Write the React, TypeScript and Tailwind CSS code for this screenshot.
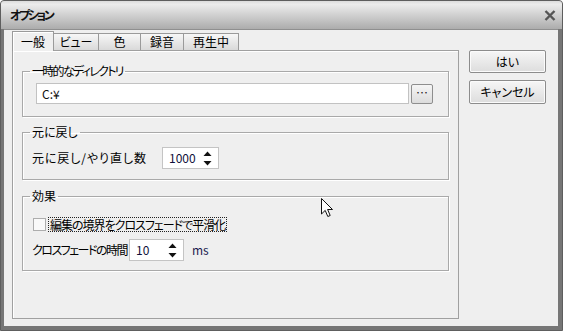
import React from 'react';

// タブ定義
const tabs = [
  { label: '一般', w: 'w-[42px]', active: true },
  { label: 'ビュー', w: 'w-[45px]', active: false },
  { label: '色', w: 'w-[42px]', active: false },
  { label: '録音', w: 'w-[43px]', active: false },
  { label: '再生中', w: 'w-[55px]', active: false },
];

function SpinArrows() {
  return (
    <svg width="9" height="15" viewBox="0 0 9 15" className="shrink-0">
      <path d="M4.5 0.5 L8.5 5 L0.5 5 Z" fill="#111" />
      <path d="M0.5 10 L8.5 10 L4.5 14.5 Z" fill="#111" />
    </svg>
  );
}

function Spin({ value, className }: { value: string; className: string }) {
  return (
    <div
      className={`flex items-center justify-between bg-white border border-[#c4c4c4] pl-[6px] pr-[6px] text-[#10103a] ${className}`}
    >
      <span>{value}</span>
      <SpinArrows />
    </div>
  );
}

function GroupBox({ title, className, children }: { title: React.ReactNode; className: string; children: React.ReactNode }) {
  return (
    <fieldset
      className={`border border-[#a9a9a9] shadow-[inset_1px_1px_0_#fff,1px_1px_0_#fff] p-0 m-0 min-w-0 ${className}`}
    >
      <legend className="ml-[7px] px-[2px] leading-[14px] text-black">{title}</legend>
      {children}
    </fieldset>
  );
}

export default function App() {
  return (
    <div className="relative w-[563px] h-[331px] flex flex-col bg-[#767676] border border-[#5e5e5e] rounded-t-[4px] overflow-hidden text-[12px] leading-[14px] text-black font-['Noto_Sans_CJK_JP',sans-serif] [font-feature-settings:'palt']">
      {/* タイトルバー */}
      <div className="h-[28px] shrink-0 flex items-center justify-between pl-[9px] pr-[6px] bg-[linear-gradient(#dcdcdc,#ececec_12%,#acacac)]">
        <span className="font-bold text-[#111] tracking-[-2.4px]">オプション</span>
        <svg width="12" height="11" viewBox="0 0 12 11">
          <path d="M1.5 1 L10.5 10 M10.5 1 L1.5 10" stroke="#555" strokeWidth="2.4" />
        </svg>
      </div>

      {/* クライアント領域 */}
      <div className="flex-1 mx-[3px] mb-[4px] mr-[4px] bg-[#efefef] border-t border-[#8f8f8f] flex pl-[8px] pt-0">
        {/* 左：タブ */}
        <div className="flex flex-col w-[447px]">
          <div className="relative z-10 flex items-end h-[20px]">
            {tabs.map((t) =>
              t.active ? (
                <div
                  key={t.label}
                  className={`${t.w} h-[20px] -mb-px flex items-center justify-center bg-[#efefef] border-x border-t border-[#9a9a9a] shadow-[inset_1px_1px_0_#fff]`}
                >
                  {t.label}
                </div>
              ) : (
                <div
                  key={t.label}
                  className={`${t.w} h-[17px] flex items-center justify-center bg-[linear-gradient(#f7f7f7,#d9d9d9)] border-t border-r border-[#9a9a9a] first:border-l`}
                >
                  {t.label}
                </div>
              )
            )}
          </div>

          {/* タブページ */}
          <div className="h-[269px] border border-[#a0a0a0] shadow-[inset_1px_1px_0_#fff] pt-[13px] pl-[9px] pr-[10px] flex flex-col">
            <GroupBox title={<span className="tracking-[-1.7px]">一時的なディレクトリ</span>} className="w-[427px] pb-[12px]">
              <div className="flex items-center pt-[5px] pl-[13px]">
                <div className="w-[373px] h-[21px] bg-white border border-[#c2c2c2] flex items-center pl-[5px] text-[#111]">
                  C:¥
                </div>
                <div className="ml-[2px] w-[22px] h-[20px] border border-[#8e8e8e] rounded-[2px] bg-[linear-gradient(#f5f5f5,#dcdcdc)] flex items-center justify-center text-[#222] leading-[10px] pb-[2px]">
                  …
                </div>
              </div>
            </GroupBox>

            <GroupBox title="元に戻し" className="w-[427px] mt-[8px] pb-[10px]">
              <div className="flex items-center pt-[8px] pl-[9px]">
                <span className="w-[130px] tracking-[0.9px]">元に戻し/やり直し数</span>
                <Spin value="1000" className="w-[57px] h-[22px]" />
              </div>
            </GroupBox>

            <GroupBox title="効果" className="w-[427px] mt-[9px] pb-[9px]">
              <div className="flex flex-col pt-[14px] pl-[10px]">
                <div className="flex items-center h-[15px]">
                  <div className="w-[13px] h-[13px] border border-[#adadad] bg-[#f9f9f9]" />
                  <span className="ml-[2px] px-[1px] border border-dotted border-[#222] leading-[13px] tracking-[-1px]">
                    編集の境界をクロスフェードで平滑化
                  </span>
                </div>
                <div className="flex items-center mt-[7px] -ml-px">
                  <span className="w-[97px] tracking-[-1.5px] whitespace-nowrap">クロスフェードの時間</span>
                  <Spin value="10" className="w-[55px] h-[22px]" />
                  <span className="ml-[8px] text-[#1c1c50]">ms</span>
                </div>
              </div>
            </GroupBox>
          </div>
        </div>

        {/* 右：ボタン */}
        <div className="flex flex-col ml-[10px] pt-[20px] gap-[7px]">
          <button className="w-[77px] h-[23px] border border-[#8c8c8c] rounded-[2px] bg-[linear-gradient(#f6f6f6,#dddddd)] shadow-[inset_0_0_0_1px_#fbfbfb]">
            はい
          </button>
          <button className="w-[77px] h-[24px] border border-[#8c8c8c] rounded-[2px] bg-[linear-gradient(#f6f6f6,#dddddd)] shadow-[inset_0_0_0_1px_#fbfbfb]">
            キャンセル
          </button>
        </div>
      </div>

      {/* マウスカーソル */}
      <svg
        width="13"
        height="20"
        viewBox="0 0 13 20"
        className="absolute left-[320px] top-[197px] pointer-events-none"
      >
        <path d="M0.5 0.5 L0.5 16 L4.2 12.4 L6.8 18.5 L9.2 17.5 L6.6 11.5 L11.5 11.5 Z" fill="#fff" stroke="#111" strokeWidth="1" strokeLinejoin="miter" />
      </svg>
    </div>
  );
}
